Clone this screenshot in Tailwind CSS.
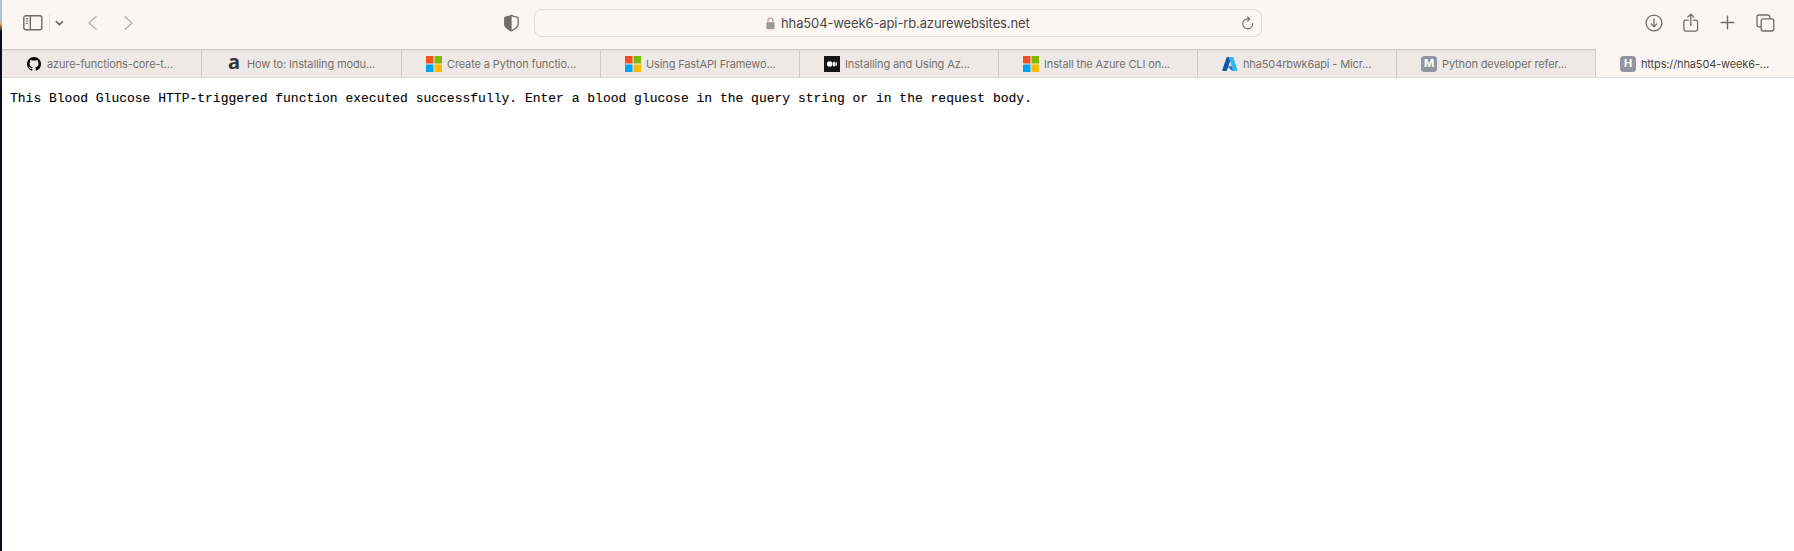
<!DOCTYPE html>
<html lang="en">
<head>
<meta charset="utf-8">
<title>hha504-week6-api-rb.azurewebsites.net</title>
<script src="https://cdn.jsdelivr.net/npm/@tailwindcss/browser@4"></script>
</head>
<body class="flex h-[551px] w-[1794px] overflow-hidden bg-white font-['Inter',sans-serif]">
<div class="w-[2px] shrink-0 bg-linear-to-b from-[#a9c3d3] from-[20px] via-[#e0ac70] via-[24px] to-[#070b1c] to-[32px]"></div>
<div class="flex min-w-0 flex-1 flex-col">
  <header class="flex h-[49px] shrink-0 bg-[#fcf6f3] text-[#6f6b68]">
    <div class="flex w-[502px] items-center pb-[4px] pl-[21px]">
      <svg class="h-4 w-5" viewBox="0 0 20 16" fill="none" stroke="currentColor" stroke-width="1.4"><rect x=".8" y=".8" width="18" height="14" rx="2"/><path d="M7.3 1v14"/><path d="M2.8 3.7h2.4M2.8 6h2.4M2.8 8.3h2.4" stroke-width="1"/></svg>
      <span class="ml-[6px] h-[18px] w-px bg-[#e8e2df]"></span>
      <svg class="ml-[5px] h-[8px] w-[9px]" viewBox="0 0 9 8" fill="none" stroke="currentColor" stroke-width="1.6" stroke-linecap="round" stroke-linejoin="round"><path d="M1.3 2.6 4.4 5.6l3.1-3"/></svg>
      <svg class="ml-[23px] h-[16px] w-[12px] text-[#b8b3b0]" viewBox="0 0 12 16" fill="none" stroke="currentColor" stroke-width="1.4" stroke-linecap="round" stroke-linejoin="round"><path d="M9 1.8 2 8l7 6.2"/></svg>
      <svg class="ml-[24px] h-[16px] w-[12px] text-[#b8b3b0]" viewBox="0 0 12 16" fill="none" stroke="currentColor" stroke-width="1.4" stroke-linecap="round" stroke-linejoin="round"><path d="m2 1.8 7 6.2-7 6.2"/></svg>
    </div>
    <div class="flex w-[30px] items-center pb-[4px]">
      <svg class="h-[18px] w-[16px]" viewBox="0 0 16 18"><path d="M7.5 1.2C6 2.3 3.5 3 1.5 3.1 1 3.2.8 3.5.8 4v6.5c0 3.3 3.8 4.9 6.7 6.3 2.9-1.4 6.6-3 6.6-6.3V4c0-.5-.2-.8-.7-.9-2-.1-4.5-.8-5.9-1.9z" fill="none" stroke="currentColor" stroke-width="1.3"/><path d="M7.6 1.2C6 2.3 3.5 3 1.5 3.1 1 3.2.8 3.5.8 4v6.5c0 3.3 3.8 4.9 6.8 6.3z" fill="currentColor"/></svg>
    </div>
    <div class="mt-[9px] flex h-[28px] w-[728px] items-center rounded-[8px] border border-[#dedad7]">
      <svg class="ml-[231px] h-[13px] w-[9px] text-[#9d9996]" viewBox="0 0 9 13"><rect x=".4" y="5.2" width="8.2" height="7" rx="1" fill="currentColor"/><path d="M2 5.5V3.6C2 .2 7 .2 7 3.6v1.9" fill="none" stroke="currentColor" stroke-width="1.1"/></svg>
      <span class="ml-[6px] w-[249px] pt-px text-[13px] tracking-[-0.12px] whitespace-nowrap text-[#4b4745]">hha504-week6-api-rb.azurewebsites.net</span>
      <svg class="ml-[212px] h-[14px] w-[12px]" viewBox="0 0 12 14" fill="none" stroke="currentColor" stroke-width="1.1" stroke-linecap="round" stroke-linejoin="round"><path d="M10.7 7.2A5 5 0 1 1 5.8 2.9h1.8M5.5.8l2.2 2.1-2.1 2.2"/></svg>
    </div>
    <div class="flex flex-1 items-center justify-end pr-[19px] pb-[4px]">
      <svg class="mr-[20px] h-[18px] w-[18px]" viewBox="0 0 18 18" fill="none" stroke="currentColor" stroke-width="1.3" stroke-linecap="round" stroke-linejoin="round"><circle cx="9" cy="9" r="7.9"/><path d="M9 5v7.6M6.1 9.9 9 12.7l2.9-2.8"/></svg>
      <svg class="mr-[21px] h-[20px] w-[16px]" viewBox="0 0 16 20" fill="none" stroke="currentColor" stroke-width="1.3" stroke-linecap="round" stroke-linejoin="round"><path d="M5.2 7.2H2.7a1.8 1.8 0 0 0-1.8 1.8v7.3a1.8 1.8 0 0 0 1.8 1.8h10.1a1.8 1.8 0 0 0 1.8-1.8V9a1.8 1.8 0 0 0-1.8-1.8h-2.5M7.8 12.5V1.3M4.9 4 7.8 1.1 10.7 4"/></svg>
      <svg class="mr-[21px] h-[15px] w-[15px]" viewBox="0 0 15 15" fill="none" stroke="currentColor" stroke-width="1.4" stroke-linecap="round"><path d="M7.5 1.2v12.6M1.2 7.5h12.6"/></svg>
      <svg class="h-[18px] w-[19px]" viewBox="0 0 19 18" fill="none" stroke="currentColor" stroke-width="1.3"><path d="M5.2 12.9H3a2 2 0 0 1-2-2V3a2 2 0 0 1 2-2h8.7a2 2 0 0 1 2 2v1.8"/><rect x="5.2" y="4.8" width="12.6" height="12.2" rx="2"/></svg>
    </div>
  </header>
  <nav class="grid h-[29px] shrink-0 grid-cols-[200px_200px_199px_199px_199px_199px_199px_199px_198px] border-b border-[#e1dedc] text-[11px] tracking-[-0.13px] whitespace-nowrap text-[#75716e]">
    <div class="flex items-center border-t border-r border-[#cfcac7] bg-[#eee9e6] pl-[25px] inset-shadow-[0_1px_0_#e5e0dd]">
      <svg class="mr-[6px] h-[14px] w-[14px] shrink-0" viewBox="0 0 16 16" fill="#090909"><path d="M8 0C3.58 0 0 3.58 0 8c0 3.54 2.29 6.53 5.47 7.59.4.07.55-.17.55-.38 0-.19-.01-.82-.01-1.49-2.01.37-2.53-.49-2.69-.94-.09-.23-.48-.94-.82-1.13-.28-.15-.68-.52-.01-.53.63-.01 1.08.58 1.23.82.72 1.21 1.87.87 2.33.66.07-.52.28-.87.51-1.07-1.78-.2-3.64-.89-3.64-3.95 0-.87.31-1.59.82-2.15-.08-.2-.36-1.02.08-2.12 0 0 .67-.21 2.2.82.64-.18 1.32-.27 2-.27s1.36.09 2 .27c1.53-1.04 2.2-.82 2.2-.82.44 1.1.16 1.92.08 2.12.51.56.82 1.27.82 2.15 0 3.07-1.87 3.75-3.65 3.95.29.25.54.73.54 1.48 0 1.07-.01 1.93-.01 2.2 0 .21.15.46.55.38A8.01 8.01 0 0 0 16 8c0-4.42-3.58-8-8-8z"/></svg>
      <span class="pt-px">azure-functions-core-t...</span>
    </div>
    <div class="flex items-center border-t border-r border-[#cfcac7] bg-[#eee9e6] pl-[26px] inset-shadow-[0_1px_0_#e5e0dd]">
      <span class="mr-[7px] w-[12px] pb-[3px] font-['Open_Sans',sans-serif] text-[20px] leading-none font-bold text-[#343434]">a</span>
      <span class="pt-px">How to: Installing modu...</span>
    </div>
    <div class="flex items-center border-t border-r border-[#cfcac7] bg-[#eee9e6] pl-[24px] inset-shadow-[0_1px_0_#e5e0dd]">
      <svg class="mr-[5px] h-4 w-4 shrink-0" viewBox="0 0 16 16"><path fill="#f25022" d="M0 0h7.5v7.5H0z"/><path fill="#7fba00" d="M8.5 0H16v7.5H8.5z"/><path fill="#00a4ef" d="M0 8.5h7.5V16H0z"/><path fill="#ffb900" d="M8.5 8.5H16V16H8.5z"/></svg>
      <span class="pt-px">Create a Python functio...</span>
    </div>
    <div class="flex items-center border-t border-r border-[#cfcac7] bg-[#eee9e6] pl-[24px] inset-shadow-[0_1px_0_#e5e0dd]">
      <svg class="mr-[5px] h-4 w-4 shrink-0" viewBox="0 0 16 16"><path fill="#f25022" d="M0 0h7.5v7.5H0z"/><path fill="#7fba00" d="M8.5 0H16v7.5H8.5z"/><path fill="#00a4ef" d="M0 8.5h7.5V16H0z"/><path fill="#ffb900" d="M8.5 8.5H16V16H8.5z"/></svg>
      <span class="pt-px">Using FastAPI Framewo...</span>
    </div>
    <div class="flex items-center border-t border-r border-[#cfcac7] bg-[#eee9e6] pl-[24px] inset-shadow-[0_1px_0_#e5e0dd]">
      <svg class="mr-[5px] h-4 w-4 shrink-0" viewBox="0 0 16 16"><path fill="#151515" d="M0 0h16v16H0z"/><g fill="#fff"><circle cx="5.7" cy="8" r="2.8"/><ellipse cx="10.2" cy="8" rx="1.4" ry="2.6"/><ellipse cx="12.5" cy="8" rx=".5" ry="2.3"/></g></svg>
      <span class="pt-px">Installing and Using Az...</span>
    </div>
    <div class="flex items-center border-t border-r border-[#cfcac7] bg-[#eee9e6] pl-[24px] inset-shadow-[0_1px_0_#e5e0dd]">
      <svg class="mr-[5px] h-4 w-4 shrink-0" viewBox="0 0 16 16"><path fill="#f25022" d="M0 0h7.5v7.5H0z"/><path fill="#7fba00" d="M8.5 0H16v7.5H8.5z"/><path fill="#00a4ef" d="M0 8.5h7.5V16H0z"/><path fill="#ffb900" d="M8.5 8.5H16V16H8.5z"/></svg>
      <span class="pt-px">Install the Azure CLI on...</span>
    </div>
    <div class="flex items-center border-t border-r border-[#cfcac7] bg-[#eee9e6] pl-[24px] inset-shadow-[0_1px_0_#e5e0dd]">
      <svg class="mr-[5px] h-4 w-4 shrink-0" viewBox="0 0 16 16"><path fill="#1459a8" d="M5.2 1h4.5L5 14.3a.9.9 0 0 1-.8.6H1.2a.8.8 0 0 1-.8-1.1L4.5 1.6a.8.8 0 0 1 .7-.6z"/><path fill="#0e79d2" d="M11.8 10.2H5.4l4.5 4.5 2.8.2z"/><path fill="#38b5ee" d="M6 1h4.6c.4 0 .7.2.8.6l4 12.2a.8.8 0 0 1-.8 1.1h-4.5c.6 0 .9-.6.7-1.1L6.8 1.6A.9.9 0 0 0 6 1z"/></svg>
      <span class="pt-px">hha504rbwk6api - Micr...</span>
    </div>
    <div class="flex items-center border-t border-r border-[#cfcac7] bg-[#eee9e6] pl-[24px] inset-shadow-[0_1px_0_#e5e0dd]">
      <span class="mr-[5px] flex h-4 w-4 items-center justify-center rounded-[3.5px] bg-[#9294a0] text-[11px] font-bold text-white">M</span>
      <span class="pt-px">Python developer refer...</span>
    </div>
    <div class="flex items-center bg-[#fcf6f3] pl-[24px] pt-px text-[#474341]">
      <span class="mr-[5px] flex h-4 w-4 items-center justify-center rounded-[3.5px] bg-[#9294a0] text-[11px] font-bold text-white">H</span>
      <span class="pt-px">https://hha504-week6-...</span>
    </div>
  </nav>
  <main class="flex-1 px-2 pt-[13px]">
    <pre class="font-['Courier_New','Liberation_Mono',monospace] text-[13px] leading-[15px] text-black [-webkit-text-stroke:0.1px_black]">This Blood Glucose HTTP-triggered function executed successfully. Enter a blood glucose in the query string or in the request body.</pre>
  </main>
</div>
</body>
</html>
